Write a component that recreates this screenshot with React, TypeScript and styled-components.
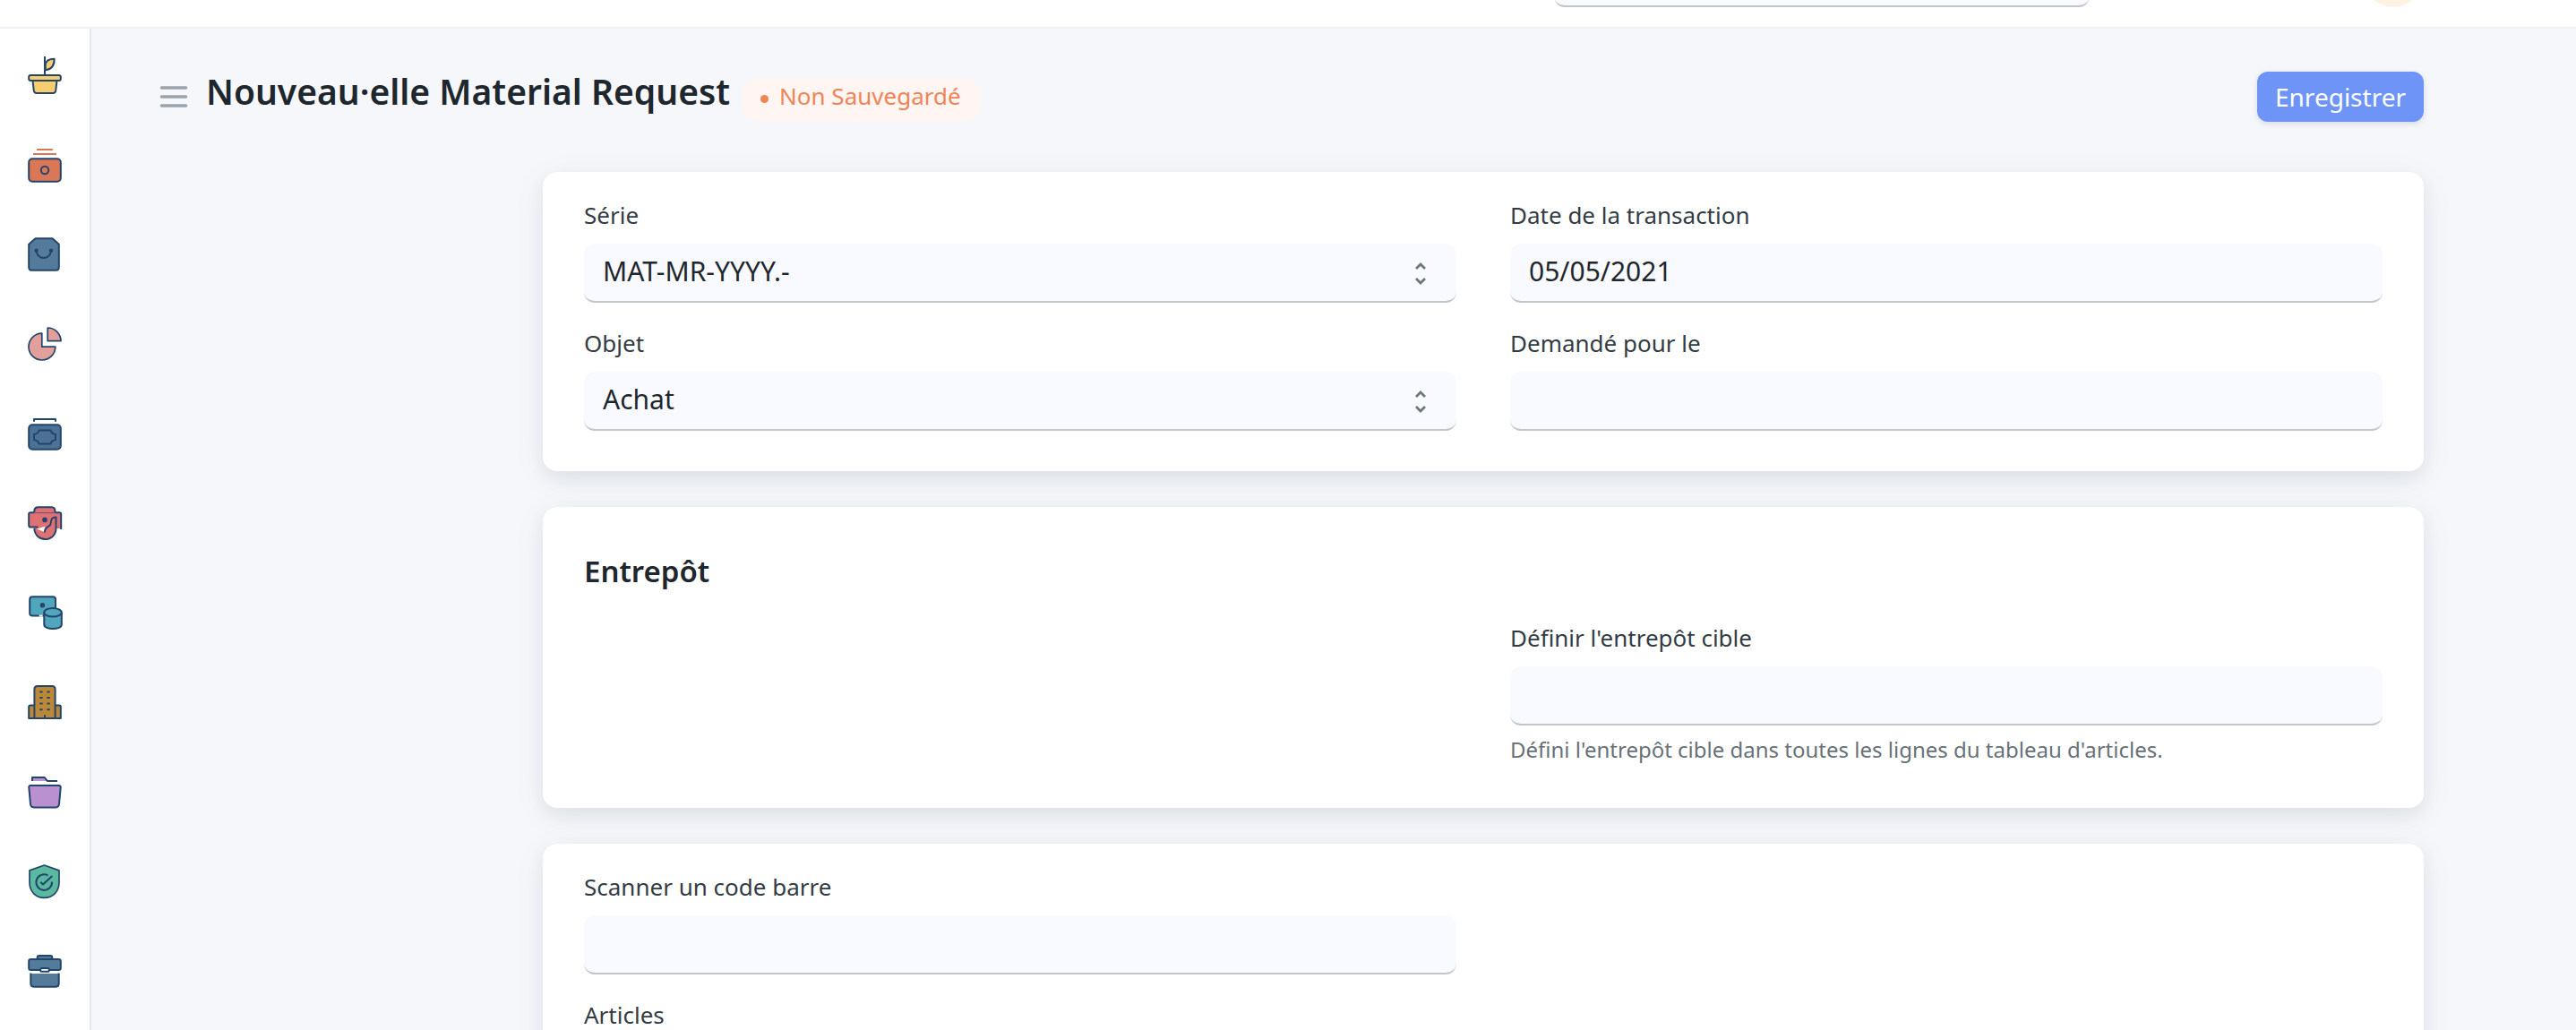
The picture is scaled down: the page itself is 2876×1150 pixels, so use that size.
import React from 'react';
import styled, { createGlobalStyle } from 'styled-components';

const ink = '#24456b';

const GlobalStyle = createGlobalStyle`
  *, *::before, *::after { box-sizing: border-box; }
  body {
    margin: 0;
    background: #f5f7fb;
    color: #1f272e;
    font-family: 'Noto Sans', 'Open Sans', sans-serif;
    font-size: 26px;
  }
  button, input, select { font-family: inherit; }
`;

const Page = styled.div`
  display: flex;
  flex-direction: column;
  height: 100vh;
  overflow: hidden;
`;

const TopBar = styled.header`
  display: flex;
  flex: none;
  align-items: flex-end;
  justify-content: flex-end;
  gap: 305px;
  height: 32px;
  padding: 0 170px 22px;
  background: #fff;
  border-bottom: 2px solid #edf1f5;
`;

const SearchBox = styled.input`
  width: 598px;
  height: 60px;
  padding: 0 20px;
  border: 0;
  border-bottom: 2px solid #c0c6cc;
  border-radius: 12px;
  background: #f9faff;
  font-size: 26px;
`;

const Avatar = styled.button`
  width: 68px;
  height: 68px;
  padding: 0;
  border: 0;
  border-radius: 50%;
  background: #fdf3e2;
`;

const Body = styled.div`
  display: flex;
  flex: 1;
  min-height: 0;
`;

const Rail = styled.nav`
  display: flex;
  flex: none;
  flex-direction: column;
  align-items: center;
  gap: 60px;
  width: 102px;
  padding-top: 32px;
  background: #fff;
  border-right: 2px solid #e4e7ee;
`;

const RailLink = styled.a`
  display: block;
  width: 40px;
  height: 40px;
  flex: none;
`;

const RailIcon = styled.svg`
  display: block;
  width: 40px;
  height: 40px;
  overflow: visible;
`;

const Main = styled.main`
  flex: 1;
  min-width: 0;
  padding: 48px 170px 0 76px;
`;

const PageHead = styled.div`
  display: flex;
  align-items: center;
  justify-content: space-between;
  margin-bottom: 56px;
`;

const HeadLeft = styled.div`
  display: flex;
  align-items: center;
  gap: 20px;
  height: 56px;
`;

const MenuButton = styled.button`
  display: block;
  height: 32px;
  padding: 0;
  border: 0;
  background: none;
`;

const TitleGroup = styled.div`
  display: flex;
  align-items: baseline;
  gap: 14px;
`;

const Title = styled.h1`
  margin: 0;
  font-size: 39px;
  font-weight: 600;
  line-height: 40px;
  white-space: nowrap;
`;

const Status = styled.span`
  padding: 0 22px 9px 20px;
  border-radius: 16px;
  background: #fff5f2;
  color: #f08456;
  font-size: 26px;
  line-height: 38px;
  white-space: nowrap;

  &::before {
    content: '';
    display: inline-block;
    width: 9px;
    height: 9px;
    margin-right: 12px;
    border-radius: 50%;
    background: currentColor;
    vertical-align: 2px;
  }
`;

const SaveButton = styled.button`
  height: 56px;
  padding: 0 20px;
  border: 0;
  border-radius: 12px;
  background: #6e94f8;
  box-shadow: 0 2px 6px rgba(25, 39, 52, 0.14);
  color: #fff;
  font-size: 28px;
  line-height: 38px;
`;

const Columns = styled.div`
  display: grid;
  grid-template-columns: 428px minmax(0, 1fr);
`;

const Form = styled.form`
  display: flex;
  grid-column: 2;
  flex-direction: column;
  gap: 40px;
`;

const Card = styled.section`
  padding: 31px 46px 45px;
  border-radius: 16px;
  background: #fff;
  box-shadow: 0 8px 40px rgba(25, 39, 52, 0.05), 0 8px 20px rgba(25, 39, 52, 0.07);
`;

const CardTitle = styled.h2`
  margin: 18px 0 34px;
  font-size: 33px;
  font-weight: 600;
  line-height: 46px;
`;

const Fields = styled.div`
  display: grid;
  grid-template-columns: repeat(2, minmax(0, 1fr));
  gap: 28px 60px;
`;

const FieldBox = styled.div<{ $column?: number }>`
  grid-column: ${(p) => p.$column ?? 'auto'};
`;

const Label = styled.label`
  display: block;
  margin-bottom: 15px;
  color: #333c44;
  font-size: 26px;
  line-height: 34px;
`;

const TableLabel = styled(Label).attrs({ as: 'h3' })`
  margin-top: 0;
  font-weight: 400;
`;

const TextInput = styled.input`
  display: block;
  width: 100%;
  height: 66px;
  padding: 0 21px 4px;
  border: 0;
  border-bottom: 2px solid #c0c6cc;
  border-radius: 12px;
  outline: 0;
  background: #f9faff;
  color: #1f272e;
  font-size: 30px;
`;

const SelectInput = styled(TextInput).attrs({ as: 'select' })`
  appearance: none;
`;

const SelectWrap = styled.div`
  position: relative;
`;

const SelectArrows = styled.svg`
  position: absolute;
  top: 50%;
  right: 32px;
  width: 16px;
  height: 28px;
  margin-top: -14px;
  pointer-events: none;
`;

const Hint = styled.p`
  margin: 9px 0 2px;
  color: #687178;
  font-size: 24px;
  line-height: 36px;
`;

const railItems: { name: string; art: React.ReactNode }[] = [
  {
    name: 'Démarrage',
    art: (
      <g fill="#f7cd70">
        <path d="M20.7 14.3V7.5Q22.5 1.6 30.6 1.8Q31 13 20.7 14.3Z" />
        <path d="M20 20V-1" />
        <path d="M6.5 26L7.8 37.4Q8.3 40 10.8 40H29.2Q31.7 40 32.2 37.4L33.5 26" />
        <rect x="2.2" y="20" width="35.6" height="5.9" rx="2" />
      </g>
    ),
  },
  {
    name: 'Comptabilité',
    art: (
      <g fill="#d97757">
        <path stroke="#d97757" d="M11 3H28.8M7 8H33" />
        <rect x="2.2" y="13.2" width="35.6" height="25.6" rx="4" />
        <circle cx="20" cy="26" r="4.2" />
      </g>
    ),
  },
  {
    name: 'Achats',
    art: (
      <g fill="#557b9b">
        <path d="M2.2 8.8L9.5 2.2H28.5L35.8 8.8V34.3Q35.8 37.8 32.3 37.8H5.7Q2.2 37.8 2.2 34.3Z" />
        <path fill="none" d="M10.6 16C11.5 26.8 26.1 26.8 27 16" />
        <circle cx="10.6" cy="15.7" r="1.2" fill={ink} />
        <circle cx="27" cy="15.7" r="1.2" fill={ink} />
      </g>
    ),
  },
  {
    name: 'Rapports',
    art: (
      <g fill="#e2a09d" strokeWidth="1.7">
        <path d="M16.8 8.2A14.9 14.9 0 1 0 31.8 23.2H16.8Z" />
        <path d="M23.2 2V16.7H38A14.8 14.8 0 0 0 23.2 2Z" />
      </g>
    ),
  },
  {
    name: 'Ventes',
    art: (
      <g fill="#4b7194">
        <path fill="none" d="M8 6.7V4H32V6.7" />
        <rect x="2.2" y="10.2" width="35.6" height="27.6" rx="4" />
        <path d="M13.5 16.4H26.5C27 18.5 29 20.4 32 20.9V27.1C29 27.6 27 29.5 26.5 31.5H13.5C13 29.5 11 27.6 8 27.1V20.9C11 20.4 13 18.5 13.5 16.4Z" />
      </g>
    ),
  },
  {
    name: 'Agriculture',
    art: (
      <g fill="#df7073">
        <path stroke="none" d="M8.5 8H38V26H32.5C32 45 8.5 42 8.5 25H2V8Z" />
        <path stroke="none" fill="#fff" d="M11 26.4L20.4 23.8L19 29.8Z" />
        <path d="M8.3 8V5.5Q9 2.2 12.5 2.2H28Q31 2.6 31.4 5.5V8" />
        <path strokeWidth="1" opacity="0.6" d="M9 8.6H31" />
        <path fill="none" d="M8.3 8.3H4Q2.2 8.3 2.2 10V22.5Q2.2 24.6 4.2 24.6H12.5M31.4 8.3H36.5Q38.2 8.3 38.2 10V27" />
        <path fill="none" d="M8.3 26C8.8 34 14.5 38 20.6 38C27.5 38 32.5 33 32.5 26V13.4C28 13.2 26.8 16.2 26.7 20.5C26.5 24.5 20 22.5 19.8 30.5" />
        <circle cx="20" cy="16.4" r="1.8" fill={ink} />
      </g>
    ),
  },
  {
    name: 'Données',
    art: (
      <g fill="#50a6bc">
        <rect x="3.2" y="2.2" width="28.8" height="21.2" rx="3" />
        <circle cx="17.4" cy="11.7" r="1.7" fill={ink} />
        <path stroke="#fff" strokeWidth="4" fill="none" d="M15.7 22.5V24.5" />
        <path d="M19.3 20V33.5C19.3 39.5 38.8 39.5 38.8 33.5V20" />
        <ellipse cx="29" cy="19.8" rx="9.8" ry="4.8" />
      </g>
    ),
  },
  {
    name: 'Immobilisations',
    art: (
      <g fill="#ba8836">
        <path d="M8.5 23.4H4Q2.2 23.4 2.2 25V37.9H37.8V25Q37.8 23.4 36 23.4H31.5" />
        <path d="M8.4 37.9V5.5Q8.4 2 12 2H28Q31.6 2 31.6 5.5V37.9Z" />
        <path d="M14.3 8.4H17.6M22.4 8.4H25.7M14.3 15H17.6M22.4 15H25.7M14.3 21.6H17.6M22.4 21.6H25.7M14.3 28.2H17.6M22.4 28.2H25.7M20 34.3V37.5" />
      </g>
    ),
  },
  {
    name: 'Projets',
    art: (
      <g fill="#b991d1">
        <path stroke="none" d="M5.7 4H20L22.3 8H5.7Z" />
        <path fill="none" d="M6 8V4H19.8L22.8 7.9H34" />
        <path d="M2.3 15.2Q2.1 13.1 4.2 13.1H35.8Q37.9 13.1 37.7 15.2L36 34Q35.6 37.4 32.3 37.4H7.7Q4.4 37.4 4 34Z" />
      </g>
    ),
  },
  {
    name: 'Qualité',
    art: (
      <g fill="#5ab99e">
        <path strokeWidth="1.7" d="M19.4 2L36 7.9V21C36 31.5 29 38.4 19.4 38.4C9.8 38.4 3 31.5 3 21V7.9Z" />
        <path fill="none" d="M23.5 13.4A8.8 8.8 0 1 0 28 20.5" />
        <path fill="none" d="M15.3 20.7L18 23.6L28.3 14" />
      </g>
    ),
  },
  {
    name: 'Support',
    art: (
      <g fill="#557b9b">
        <path d="M11.7 6.5V5Q11.7 3 13.7 3H26.3Q28.3 3 28.3 5V6.5" />
        <rect x="2.2" y="7" width="35.6" height="12" rx="2.2" />
        <path stroke="none" d="M4.2 23H35.8V37.5H4.2Z" />
        <path fill="none" d="M4.3 22.6V34Q4.3 37.8 8.2 37.8H31.8Q35.7 37.8 35.7 34V22.6" />
        <rect x="15.2" y="17" width="9.6" height="3.8" rx="1.6" fill="#fff" />
      </g>
    ),
  },
];

type FieldProps = {
  id: string;
  label: string;
  value?: string;
  column?: number;
  hint?: string;
};

function TextField({ id, label, value = '', column, hint }: FieldProps) {
  return (
    <FieldBox $column={column}>
      <Label htmlFor={id}>{label}</Label>
      <TextInput id={id} type="text" defaultValue={value} aria-describedby={hint ? `${id}-hint` : undefined} />
      {hint && <Hint id={`${id}-hint`}>{hint}</Hint>}
    </FieldBox>
  );
}

function SelectField({ id, label, value }: FieldProps) {
  return (
    <FieldBox>
      <Label htmlFor={id}>{label}</Label>
      <SelectWrap>
        <SelectInput id={id}>
          <option>{value}</option>
        </SelectInput>
        <SelectArrows viewBox="0 0 16 28" fill="none" stroke="#6c7680" strokeWidth="2.8" aria-hidden="true">
          <path d="M3 9L8 4L13 9M3 20L8 25L13 20" />
        </SelectArrows>
      </SelectWrap>
    </FieldBox>
  );
}

export default function App() {
  return (
    <Page>
      <GlobalStyle />
      <TopBar>
        <SearchBox type="search" aria-label="Rechercher" />
        <Avatar type="button" aria-label="Compte" />
      </TopBar>
      <Body>
        <Rail aria-label="Modules">
          {railItems.map((item) => (
            <RailLink key={item.name} href="#" aria-label={item.name}>
              <RailIcon viewBox="0 0 40 40" fill="none" stroke={ink} strokeWidth="2" strokeLinejoin="round" aria-hidden="true">
                {item.art}
              </RailIcon>
            </RailLink>
          ))}
        </Rail>
        <Main>
          <PageHead>
            <HeadLeft>
              <MenuButton type="button" aria-label="Menu">
                <svg width="32" height="32" viewBox="0 0 32 32" stroke="#9aa3ac" strokeWidth="3.6" strokeLinecap="round" aria-hidden="true">
                  <path d="M2.5 6H29.5M2.5 16H29.5M2.5 26H29.5" />
                </svg>
              </MenuButton>
              <TitleGroup>
                <Title>Nouveau·elle Material Request</Title>
                <Status>Non Sauvegardé</Status>
              </TitleGroup>
            </HeadLeft>
            <SaveButton type="submit" form="request">Enregistrer</SaveButton>
          </PageHead>
          <Columns>
            <Form id="request">
              <Card>
                <Fields>
                  <SelectField id="series" label="Série" value="MAT-MR-YYYY.-" />
                  <TextField id="date" label="Date de la transaction" value="05/05/2021" />
                  <SelectField id="purpose" label="Objet" value="Achat" />
                  <TextField id="required-by" label="Demandé pour le" />
                </Fields>
              </Card>
              <Card>
                <CardTitle>Entrepôt</CardTitle>
                <Fields>
                  <TextField
                    id="warehouse"
                    label="Définir l'entrepôt cible"
                    column={2}
                    hint="Défini l'entrepôt cible dans toutes les lignes du tableau d'articles."
                  />
                </Fields>
              </Card>
              <Card>
                <Fields>
                  <TextField id="barcode" label="Scanner un code barre" />
                  <FieldBox $column={1}>
                    <TableLabel>Articles</TableLabel>
                  </FieldBox>
                </Fields>
              </Card>
            </Form>
          </Columns>
        </Main>
      </Body>
    </Page>
  );
}
